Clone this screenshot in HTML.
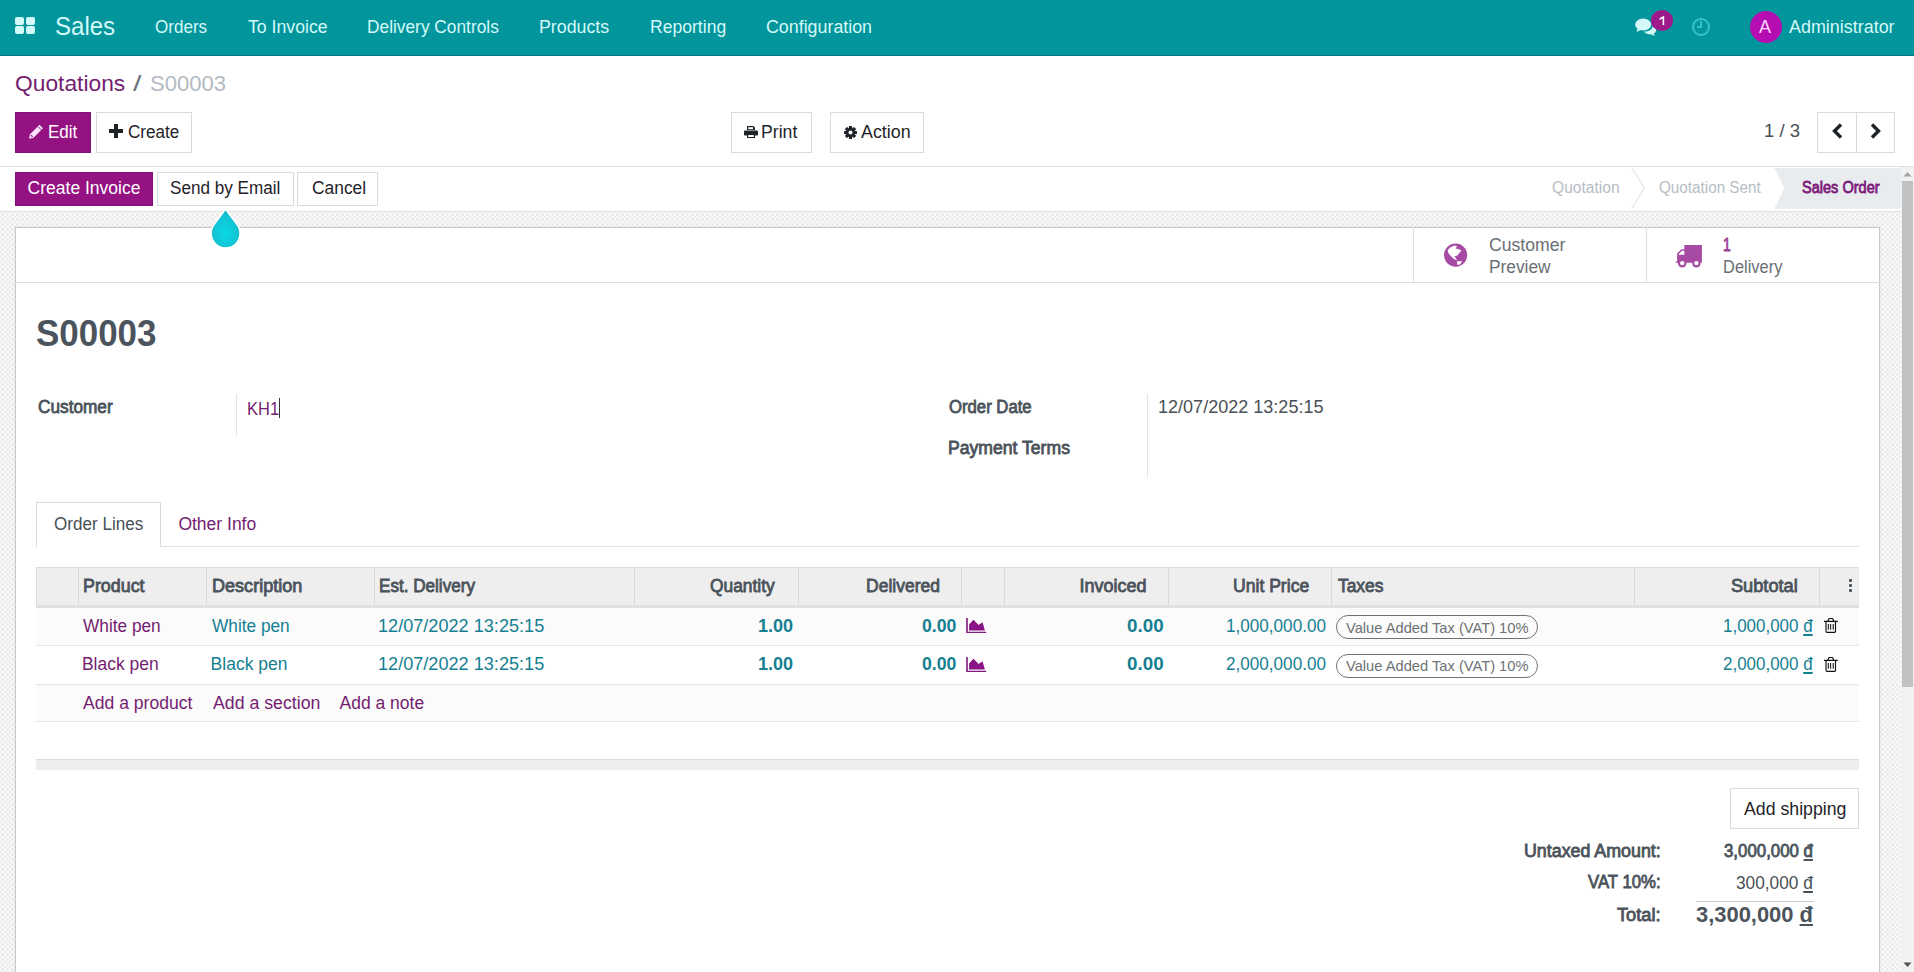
<!DOCTYPE html>
<html><head><meta charset="utf-8">
<style>
html,body{margin:0;padding:0;}
body{width:1914px;height:972px;overflow:hidden;position:relative;background:#fff;font-family:"Liberation Sans",sans-serif;}
.t{position:absolute;white-space:pre;transform-origin:0 0;font-family:"Liberation Sans",sans-serif;}
.a{position:absolute;box-sizing:border-box;}
svg{position:absolute;overflow:visible;}
.dong{text-decoration:underline;text-decoration-thickness:1.5px;text-underline-offset:1.5px;}
</style></head>
<body>
<!-- navbar -->
<div class="a" style="left:0;top:0;width:1914px;height:56px;background:#02959b;border-bottom:1px solid #06737a;"></div>
<!-- grid icon -->
<div class="a" style="left:15px;top:17px;width:9px;height:8px;background:#d4f9f9;border-radius:2px"></div>
<div class="a" style="left:26px;top:17px;width:9px;height:8px;background:#d4f9f9;border-radius:2px"></div>
<div class="a" style="left:15px;top:26px;width:9px;height:8px;background:#d4f9f9;border-radius:2px"></div>
<div class="a" style="left:26px;top:26px;width:9px;height:8px;background:#d4f9f9;border-radius:2px"></div>
<!-- chat icon -->
<svg style="left:1635px;top:18px" width="22" height="18" viewBox="0 0 22 18">
 <ellipse cx="8.2" cy="6.5" rx="8" ry="6" fill="#d4f9f9"/>
 <path d="M2.5 10.5 L1.5 14 L6.5 11.5 Z" fill="#d4f9f9"/>
 <path d="M9 13.4 C12.5 14 17 12.5 17.5 8.5 C20 9.5 21.5 11 21 13 C20.5 14.5 19.5 15.3 18.5 15.6 L20 18 L15.5 16.2 C13 16.4 10.5 15.3 9 13.4 Z" fill="#d4f9f9"/>
</svg>
<div class="a" style="left:1651px;top:10px;width:22px;height:20.5px;border-radius:50%;background:#9c1a8c;"></div>
<svg style="left:1651px;top:10px" width="22" height="21" viewBox="0 0 22 21"><path d="M8.6 8.3 L11.9 6.2 H13.2 V15.1 H11.6 V8.4 L8.6 10 Z" fill="#fff"/></svg>
<!-- clock icon -->
<div class="a" style="left:1691.5px;top:17.5px;width:18px;height:18px;border-radius:50%;border:2px solid #37c4c9;"></div>
<div class="a" style="left:1700px;top:21px;width:1.5px;height:6px;background:#37c4c9;"></div>
<div class="a" style="left:1697px;top:26px;width:4.5px;height:1.5px;background:#37c4c9;"></div>
<!-- avatar -->
<div class="a" style="left:1750px;top:11px;width:32px;height:32px;border-radius:50%;background:#b50db2;"></div>
<div class="t" style="left:1759px;top:17.5px;font-size:18px;line-height:18px;color:#ffd9ff">A</div>

<!-- control panel -->
<div class="a" style="left:0;top:166px;width:1914px;height:1px;background:#dfe2e5"></div>
<div class="a" style="left:15px;top:112px;width:76px;height:41px;background:#951283;border:1px solid #84107a;"></div>
<svg style="left:28px;top:123.5px" width="16" height="15" viewBox="0 0 16 15">
 <path d="M11.5 0.8 L15 4.3 L5.5 13.8 L1 14.8 L2 10.3 Z" fill="#fbe3fb"/>
 <path d="M3 11.2 L4.6 12.8" stroke="#951283" stroke-width="1.2"/>
 <path d="M10 2.6 L13.2 5.8" stroke="#951283" stroke-width="1"/>
</svg>
<div class="a" style="left:96px;top:112px;width:96px;height:41px;background:#fff;border:1px solid #d9dbdd;"></div>
<svg style="left:109.4px;top:124px" width="14" height="14" viewBox="0 0 14 14">
 <path d="M5 0 H9 V5 H14 V9 H9 V14 H5 V9 H0 V5 H5 Z" fill="#1f2328"/>
</svg>
<div class="a" style="left:731px;top:112px;width:81px;height:41px;background:#fff;border:1px solid #d9dbdd;"></div>
<svg style="left:744px;top:126px" width="14" height="12" viewBox="0 0 14 12">
 <path d="M3 0 H9.5 L11 1.5 V4 H3 Z" fill="#1f2328"/>
 <path d="M4.2 1.2 H9 V3.2 H4.2 Z" fill="#fff"/>
 <rect x="0" y="4.5" width="14" height="5" rx="1" fill="#1f2328"/>
 <path d="M3 8 H11 V12 H3 Z" fill="#1f2328"/>
 <path d="M4.2 9 H9.8 V11 H4.2 Z" fill="#fff"/>
</svg>
<div class="a" style="left:830px;top:112px;width:94px;height:41px;background:#fff;border:1px solid #d9dbdd;"></div>
<svg style="left:843.5px;top:125.5px" width="13" height="13" viewBox="-6.5 -6.5 13 13">
 <g fill="#1f2328">
  <circle r="4.6"/>
  <rect x="-1.6" y="-6.5" width="3.2" height="13" rx="0.5"/>
  <rect x="-1.6" y="-6.5" width="3.2" height="13" rx="0.5" transform="rotate(45)"/>
  <rect x="-1.6" y="-6.5" width="3.2" height="13" rx="0.5" transform="rotate(90)"/>
  <rect x="-1.6" y="-6.5" width="3.2" height="13" rx="0.5" transform="rotate(135)"/>
 </g>
 <circle r="2" fill="#fff"/>
</svg>
<!-- pager -->
<div class="a" style="left:1817px;top:112px;width:78px;height:41px;background:#fff;border:1px solid #d9dbdd;"></div>
<div class="a" style="left:1856px;top:112px;width:1px;height:41px;background:#d9dbdd;"></div>
<svg style="left:1832px;top:122.6px" width="11" height="16" viewBox="0 0 11 16">
 <path d="M9 1.5 L2.5 8 L9 14.5" stroke="#1f2328" stroke-width="3.4" fill="none"/>
</svg>
<svg style="left:1870px;top:122.6px" width="11" height="16" viewBox="0 0 11 16">
 <path d="M2 1.5 L8.5 8 L2 14.5" stroke="#1f2328" stroke-width="3.4" fill="none"/>
</svg>

<!-- content area background (checker) -->
<div class="a" style="left:0;top:212px;width:1901px;height:760px;background-color:#fdfdfd;background-image:radial-gradient(circle,#e5e5e5 0.8px,rgba(229,229,229,0) 1.8px),radial-gradient(circle,#e5e5e5 0.8px,rgba(229,229,229,0) 1.8px);background-size:5px 5px;background-position:0 0,2.5px 2.5px;"></div>
<!-- statusbar -->
<div class="a" style="left:0;top:211px;width:1901px;height:1px;background:#dfe2e5"></div>
<div class="a" style="left:15px;top:172px;width:138px;height:34px;background:#951283;border:1px solid #84107a;"></div>
<div class="a" style="left:157px;top:172px;width:137px;height:34px;background:#fff;border:1px solid #d9dbdd;"></div>
<div class="a" style="left:297px;top:172px;width:81px;height:34px;background:#fff;border:1px solid #d9dbdd;"></div>
<svg style="left:1620px;top:167px" width="290" height="44" viewBox="1620 167 290 44">
 <path d="M1632.3 168.5 L1644.3 188 L1632.3 207.8" stroke="#e2e2e2" stroke-width="1.2" fill="none"/>
 <path d="M1774.3 168 L1901 168 L1901 208.8 L1774.3 208.8 L1784.4 188 Z" fill="#e9ecef"/>
</svg>

<!-- sheet -->
<div class="a" style="left:15px;top:227px;width:1865px;height:760px;background:#fff;border:1px solid #c9c9c9;box-shadow:0 0 2px rgba(0,0,0,0.10);"></div>
<!-- button box -->
<div class="a" style="left:15px;top:282px;width:1865px;height:1px;background:#dcdfe2"></div>
<div class="a" style="left:1413px;top:227px;width:1px;height:55px;background:#dcdfe2"></div>
<div class="a" style="left:1646px;top:227px;width:1px;height:55px;background:#dcdfe2"></div>
<svg style="left:1440px;top:240px" width="32" height="30" viewBox="0 0 32 30">
 <circle cx="15.6" cy="15.1" r="11.6" fill="#a64aa3"/>
 <path d="M7.7 9.9 L10.5 7.2 L14.5 5.6 L17.3 6.5 L15.4 8.3 L21.6 10.2 L17.3 15.4 L14.5 16.4 L16 18.5 L17 20.5 L15.5 19.8 L13.3 18.5 L10.5 15.8 L8.3 13 Z" fill="#fff"/>
 <path d="M17 21.3 L22.2 21.3 L20 24.5 L17.2 24.8 Z" fill="#fff"/>
</svg>
<svg style="left:1672px;top:240px" width="34" height="30" viewBox="0 0 34 30">
 <path d="M12.3 5.1 H29.9 V22.7 H3.7 V21.5 H5.1 V13.6 L9.3 9.3 H12.3 Z" fill="#a64aa3"/>
 <path d="M6.2 14.8 H12.3 V10.8 H9.9 Z" fill="#fff"/>
 <circle cx="10.2" cy="23.1" r="4.3" fill="#a64aa3"/><circle cx="10.2" cy="23.1" r="2.2" fill="#fff"/>
 <circle cx="24.4" cy="23.1" r="4.3" fill="#a64aa3"/><circle cx="24.4" cy="23.1" r="2.2" fill="#fff"/>
</svg>
<!-- field separators -->
<div class="a" style="left:236px;top:394px;width:1px;height:42px;background:#e3e3e3"></div>
<div class="a" style="left:1147px;top:394px;width:1px;height:83px;background:#e3e3e3"></div>
<div class="a" style="left:278.5px;top:398px;width:1.2px;height:20px;background:#333"></div>
<!-- tabs -->
<div class="a" style="left:36px;top:546px;width:1823px;height:1px;background:#dee2e6"></div>
<div class="a" style="left:36px;top:502px;width:125px;height:45px;background:#fff;border:1px solid #d9dbdd;border-bottom:none;"></div>

<!-- table -->
<div class="a" style="left:36px;top:567px;width:1823px;height:38px;background:#eeeeee;border-top:1px solid #dedede;border-left:1px solid #dcdcdc"></div>
<div class="a" style="left:36px;top:605px;width:1823px;height:3px;background:#dee1e4"></div>
<div class="a" style="left:36px;top:608px;width:1823px;height:37px;background:#fbfbfb"></div>
<div class="a" style="left:36px;top:645px;width:1823px;height:1px;background:#e3e5e8"></div>
<div class="a" style="left:36px;top:684px;width:1823px;height:1px;background:#e3e5e8"></div>
<div class="a" style="left:36px;top:685px;width:1823px;height:36px;background:#fbfbfb"></div>
<div class="a" style="left:36px;top:721px;width:1823px;height:1px;background:#e3e5e8"></div>
<div class="a" style="left:36px;top:759px;width:1823px;height:11px;background:#eeeeee;border-top:1px solid #dcdcdc"></div>
<div id="colseps">
<div class="a" style="left:78px;top:568px;width:1px;height:37px;background:#dadada"></div>
<div class="a" style="left:206px;top:568px;width:1px;height:37px;background:#dadada"></div>
<div class="a" style="left:374px;top:568px;width:1px;height:37px;background:#dadada"></div>
<div class="a" style="left:634px;top:568px;width:1px;height:37px;background:#dadada"></div>
<div class="a" style="left:798px;top:568px;width:1px;height:37px;background:#dadada"></div>
<div class="a" style="left:961px;top:568px;width:1px;height:37px;background:#dadada"></div>
<div class="a" style="left:1004px;top:568px;width:1px;height:37px;background:#dadada"></div>
<div class="a" style="left:1168px;top:568px;width:1px;height:37px;background:#dadada"></div>
<div class="a" style="left:1331px;top:568px;width:1px;height:37px;background:#dadada"></div>
<div class="a" style="left:1634px;top:568px;width:1px;height:37px;background:#dadada"></div>
<div class="a" style="left:1819px;top:568px;width:1px;height:37px;background:#dadada"></div>
</div>
<!-- kebab -->
<div class="a" style="left:1848.5px;top:578.5px;width:3.5px;height:3.5px;background:#4b535b;border-radius:1px"></div>
<div class="a" style="left:1848.5px;top:583.5px;width:3.5px;height:3.5px;background:#4b535b;border-radius:1px"></div>
<div class="a" style="left:1848.5px;top:588.5px;width:3.5px;height:3.5px;background:#4b535b;border-radius:1px"></div>
<!-- badges -->
<div class="a" style="left:1336px;top:615px;width:202px;height:24px;border:1.3px solid #6e7275;border-radius:12px"></div>
<div class="a" style="left:1336px;top:654px;width:202px;height:24px;border:1.3px solid #6e7275;border-radius:12px"></div>
<!-- chart icons -->
<svg style="left:960px;top:612px" width="32" height="26" viewBox="0 0 32 26">
 <path d="M6.2 5.9 H7.8 V19.8 H26.2 V21.1 H6.2 Z" fill="#7d1a7a"/>
 <path d="M9.1 12.5 L13.4 7.7 L18.6 13.1 L22.5 10.2 L24.9 18.5 H9.1 Z" fill="#8a1386"/>
</svg>
<svg style="left:960px;top:650.5px" width="32" height="26" viewBox="0 0 32 26">
 <path d="M6.2 5.9 H7.8 V19.8 H26.2 V21.1 H6.2 Z" fill="#7d1a7a"/>
 <path d="M9.1 12.5 L13.4 7.7 L18.6 13.1 L22.5 10.2 L24.9 18.5 H9.1 Z" fill="#8a1386"/>
</svg>
<!-- trash icons -->
<svg style="left:1818px;top:612px" width="26" height="26" viewBox="0 0 26 26">
 <path d="M9.9 9.4 L10.6 7.2 Q10.9 6.5 11.6 6.5 H14 Q14.7 6.5 15 7.2 L15.7 9.4" stroke="#111" stroke-width="1.2" fill="none"/>
 <path d="M5.9 9.4 H19.8" stroke="#111" stroke-width="1.3"/>
 <path d="M8.0 9.8 V19.3 Q8.0 20.3 9.0 20.3 H16.6 Q17.5 20.3 17.5 19.3 V9.8" stroke="#111" stroke-width="1.15" fill="none"/>
 <path d="M10.3 12 V17.7 M12.6 12 V17.7 M15.2 12 V17.7" stroke="#111" stroke-width="1.05"/>
</svg>
<svg style="left:1818px;top:650.5px" width="26" height="26" viewBox="0 0 26 26">
 <path d="M9.9 9.4 L10.6 7.2 Q10.9 6.5 11.6 6.5 H14 Q14.7 6.5 15 7.2 L15.7 9.4" stroke="#111" stroke-width="1.2" fill="none"/>
 <path d="M5.9 9.4 H19.8" stroke="#111" stroke-width="1.3"/>
 <path d="M8.0 9.8 V19.3 Q8.0 20.3 9.0 20.3 H16.6 Q17.5 20.3 17.5 19.3 V9.8" stroke="#111" stroke-width="1.15" fill="none"/>
 <path d="M10.3 12 V17.7 M12.6 12 V17.7 M15.2 12 V17.7" stroke="#111" stroke-width="1.05"/>
</svg>
<!-- totals -->
<div class="a" style="left:1730px;top:788px;width:129px;height:41px;background:#fff;border:1px solid #d9dbdd;"></div>
<div class="a" style="left:1696px;top:901px;width:118px;height:1px;background:#c8c8c8"></div>

<!-- scrollbar -->
<div class="a" style="left:1901px;top:167px;width:13px;height:805px;background:#f1f1f1"></div>
<div class="a" style="left:1902px;top:181px;width:11px;height:506px;background:#c1c1c1"></div>
<svg style="left:1901px;top:167px" width="13" height="14" viewBox="0 0 13 14"><path d="M2.5 9.5 L6.5 5 L10.5 9.5 Z" fill="#a3a3a3"/></svg>
<svg style="left:1901px;top:958px" width="13" height="14" viewBox="0 0 13 14"><path d="M2.5 4.5 L6.5 9 L10.5 4.5 Z" fill="#505050"/></svg>

<!-- tour drop -->
<svg style="left:200px;top:200px" width="50" height="55" viewBox="0 0 50 55">
 <defs><radialGradient id="dg" cx="0.5" cy="0.62" r="0.6"><stop offset="0" stop-color="#0ad8e6"/><stop offset="1" stop-color="#17b9cb"/></radialGradient></defs>
 <path d="M25.5 9 L13.9 24.9 A14.5 14.5 0 1 0 37.3 24.9 Z" fill="url(#dg)" stroke="#ffffff" stroke-width="1.6" stroke-linejoin="round"/>
</svg>

<div class=t style="left:55.06px;top:14.01px;font-size:25.5px;line-height:25.5px;font-weight:400;color:#d4f9f9;transform:scaleX(0.9419);">Sales</div>
<div class=t style="left:155.22px;top:18.69px;font-size:17.5px;line-height:17.5px;font-weight:400;color:#d4f9f9;transform:scaleX(0.9750);">Orders</div>
<div class=t style="left:248.20px;top:18.69px;font-size:17.5px;line-height:17.5px;font-weight:400;color:#d4f9f9;transform:scaleX(1.0103);">To Invoice</div>
<div class=t style="left:367.11px;top:18.69px;font-size:17.5px;line-height:17.5px;font-weight:400;color:#d4f9f9;transform:scaleX(0.9894);">Delivery Controls</div>
<div class=t style="left:539.08px;top:18.69px;font-size:17.5px;line-height:17.5px;font-weight:400;color:#d4f9f9;transform:scaleX(1.0162);">Products</div>
<div class=t style="left:650.00px;top:18.69px;font-size:17.5px;line-height:17.5px;font-weight:400;color:#d4f9f9;transform:scaleX(1.0041);">Reporting</div>
<div class=t style="left:765.98px;top:18.69px;font-size:17.5px;line-height:17.5px;font-weight:400;color:#d4f9f9;transform:scaleX(1.0186);">Configuration</div>
<div class=t style="left:1789.00px;top:18.59px;font-size:17.5px;line-height:17.5px;font-weight:400;color:#d4f9f9;transform:scaleX(1.0243);">Administrator</div>
<div class=t style="left:14.69px;top:73.25px;font-size:22.5px;line-height:22.5px;font-weight:400;color:#741d70;transform:scaleX(1.0131);">Quotations</div>
<div class=t style="left:132.90px;top:73.25px;font-size:22.5px;line-height:22.5px;font-weight:400;color:#6c757d;transform:scaleX(1.3667);">/</div>
<div class=t style="left:150.12px;top:73.25px;font-size:22.5px;line-height:22.5px;font-weight:400;color:#b3bac2;transform:scaleX(0.9816);">S00003</div>
<div class=t style="left:47.93px;top:123.59px;font-size:17.5px;line-height:17.5px;font-weight:400;color:#ffffff;transform:scaleX(0.9724);">Edit</div>
<div class=t style="left:127.52px;top:123.59px;font-size:17.5px;line-height:17.5px;font-weight:400;color:#1f2328;transform:scaleX(0.9765);">Create</div>
<div class=t style="left:761.29px;top:123.69px;font-size:17.5px;line-height:17.5px;font-weight:400;color:#1f2328;transform:scaleX(1.0086);">Print</div>
<div class=t style="left:860.50px;top:123.69px;font-size:17.5px;line-height:17.5px;font-weight:400;color:#1f2328;transform:scaleX(1.0187);">Action</div>
<div class=t style="left:1763.94px;top:122.69px;font-size:17.5px;line-height:17.5px;font-weight:400;color:#4a4f55;transform:scaleX(1.0594);">1 / 3</div>
<div class=t style="left:27.60px;top:179.89px;font-size:17.5px;line-height:17.5px;font-weight:400;color:#ffffff;">Create Invoice</div>
<div class=t style="left:170.02px;top:179.89px;font-size:17.5px;line-height:17.5px;font-weight:400;color:#1f2328;transform:scaleX(0.9784);">Send by Email</div>
<div class=t style="left:311.61px;top:179.89px;font-size:17.5px;line-height:17.5px;font-weight:400;color:#1f2328;transform:scaleX(0.9942);">Cancel</div>
<div class=t style="left:1552.03px;top:180.26px;font-size:16px;line-height:16px;font-weight:400;color:#b6bdc4;transform:scaleX(0.9750);">Quotation</div>
<div class=t style="left:1659.05px;top:180.26px;font-size:16px;line-height:16px;font-weight:400;color:#b6bdc4;transform:scaleX(0.9528);">Quotation Sent</div>
<div class=t style="left:1802.30px;top:180.46px;font-size:16px;line-height:16px;font-weight:400;color:#7d1c7a;transform:scaleX(0.9093);-webkit-text-stroke:0.8px #7d1c7a;">Sales Order</div>
<div class=t style="left:1488.62px;top:236.26px;font-size:18px;line-height:18px;font-weight:400;color:#6a6f74;transform:scaleX(0.9792);">Customer</div>
<div class=t style="left:1488.64px;top:258.26px;font-size:18px;line-height:18px;font-weight:400;color:#6a6f74;transform:scaleX(0.9619);">Preview</div>
<div class=t style="left:1723.22px;top:236.26px;font-size:18px;line-height:18px;font-weight:400;color:#9b3f98;transform:scaleX(0.7778);-webkit-text-stroke:0.8px #9b3f98;">1</div>
<div class=t style="left:1722.59px;top:258.26px;font-size:18px;line-height:18px;font-weight:400;color:#6a6f74;transform:scaleX(0.9141);">Delivery</div>
<div class=t style="left:36.23px;top:316.03px;font-size:36px;line-height:36px;font-weight:700;color:#4b545d;transform:scaleX(0.9705);">S00003</div>
<div class=t style="left:38.20px;top:398.79px;font-size:17.5px;line-height:17.5px;font-weight:400;color:#4b535b;transform:scaleX(0.9842);-webkit-text-stroke:0.8px #4b535b;">Customer</div>
<div class=t style="left:246.66px;top:401.09px;font-size:17.5px;line-height:17.5px;font-weight:400;color:#741d70;transform:scaleX(0.9438);">KH1</div>
<div class=t style="left:949.20px;top:398.69px;font-size:17.5px;line-height:17.5px;font-weight:400;color:#4b535b;transform:scaleX(0.9547);-webkit-text-stroke:0.8px #4b535b;">Order Date</div>
<div class=t style="left:948.19px;top:440.49px;font-size:17.5px;line-height:17.5px;font-weight:400;color:#4b535b;transform:scaleX(1.0058);-webkit-text-stroke:0.8px #4b535b;">Payment Terms</div>
<div class=t style="left:1158.17px;top:398.69px;font-size:17.5px;line-height:17.5px;font-weight:400;color:#4a4f55;transform:scaleX(1.0308);">12/07/2022 13:25:15</div>
<div class=t style="left:53.52px;top:515.89px;font-size:17.5px;line-height:17.5px;font-weight:400;color:#4a4f55;transform:scaleX(0.9756);">Order Lines</div>
<div class=t style="left:178.40px;top:515.89px;font-size:17.5px;line-height:17.5px;font-weight:400;color:#741d70;">Other Info</div>
<div class=t style="left:83.21px;top:577.26px;font-size:18px;line-height:18px;font-weight:400;color:#4b535b;transform:scaleX(0.9918);-webkit-text-stroke:0.8px #4b535b;">Product</div>
<div class=t style="left:212.30px;top:577.26px;font-size:18px;line-height:18px;font-weight:400;color:#4b535b;transform:scaleX(1.0034);-webkit-text-stroke:0.8px #4b535b;">Description</div>
<div class=t style="left:379.45px;top:577.26px;font-size:18px;line-height:18px;font-weight:400;color:#4b535b;transform:scaleX(0.9500);-webkit-text-stroke:0.8px #4b535b;">Est. Delivery</div>
<div class=t style="left:710.40px;top:577.26px;font-size:18px;line-height:18px;font-weight:400;color:#4b535b;transform:scaleX(0.9642);-webkit-text-stroke:0.8px #4b535b;">Quantity</div>
<div class=t style="left:866.03px;top:577.26px;font-size:18px;line-height:18px;font-weight:400;color:#4b535b;transform:scaleX(0.9730);-webkit-text-stroke:0.8px #4b535b;">Delivered</div>
<div class=t style="left:1079.50px;top:577.26px;font-size:18px;line-height:18px;font-weight:400;color:#4b535b;-webkit-text-stroke:0.8px #4b535b;">Invoiced</div>
<div class=t style="left:1233.02px;top:577.26px;font-size:18px;line-height:18px;font-weight:400;color:#4b535b;transform:scaleX(0.9766);-webkit-text-stroke:0.8px #4b535b;">Unit Price</div>
<div class=t style="left:1337.90px;top:577.26px;font-size:18px;line-height:18px;font-weight:400;color:#4b535b;transform:scaleX(0.9660);-webkit-text-stroke:0.8px #4b535b;">Taxes</div>
<div class=t style="left:1730.59px;top:577.26px;font-size:18px;line-height:18px;font-weight:400;color:#4b535b;transform:scaleX(1.0094);-webkit-text-stroke:0.8px #4b535b;">Subtotal</div>
<div class=t style="left:82.90px;top:617.79px;font-size:17.5px;line-height:17.5px;font-weight:400;color:#741d70;transform:scaleX(0.9859);">White pen</div>
<div class=t style="left:211.60px;top:617.79px;font-size:17.5px;line-height:17.5px;font-weight:400;color:#157f92;transform:scaleX(0.9859);">White pen</div>
<div class=t style="left:378.36px;top:617.79px;font-size:17.5px;line-height:17.5px;font-weight:400;color:#157f92;transform:scaleX(1.0352);">12/07/2022 13:25:15</div>
<div class=t style="left:757.87px;top:617.79px;font-size:17.5px;line-height:17.5px;font-weight:700;color:#157f92;transform:scaleX(1.0312);">1.00</div>
<div class=t style="left:921.89px;top:617.79px;font-size:17.5px;line-height:17.5px;font-weight:700;color:#157f92;transform:scaleX(1.0094);">0.00</div>
<div class=t style="left:1127.22px;top:617.79px;font-size:17.5px;line-height:17.5px;font-weight:700;color:#157f92;transform:scaleX(1.0750);">0.00</div>
<div class=t style="left:1225.52px;top:617.79px;font-size:17.5px;line-height:17.5px;font-weight:400;color:#157f92;transform:scaleX(0.9782);">1,000,000.00</div>
<div class=t style="left:1346.00px;top:619.90px;font-size:15px;line-height:15px;font-weight:400;color:#6e7275;transform:scaleX(0.9785);">Value Added Tax (VAT) 10%</div>
<div class=t style="left:1723.23px;top:617.79px;font-size:17.5px;line-height:17.5px;font-weight:400;color:#157f92;transform:scaleX(0.9696);">1,000,000 <span class=dong>đ</span></div>
<div class=t style="left:81.90px;top:656.29px;font-size:17.5px;line-height:17.5px;font-weight:400;color:#741d70;">Black pen</div>
<div class=t style="left:210.60px;top:656.29px;font-size:17.5px;line-height:17.5px;font-weight:400;color:#157f92;">Black pen</div>
<div class=t style="left:378.36px;top:656.29px;font-size:17.5px;line-height:17.5px;font-weight:400;color:#157f92;transform:scaleX(1.0352);">12/07/2022 13:25:15</div>
<div class=t style="left:757.87px;top:656.29px;font-size:17.5px;line-height:17.5px;font-weight:700;color:#157f92;transform:scaleX(1.0312);">1.00</div>
<div class=t style="left:921.89px;top:656.29px;font-size:17.5px;line-height:17.5px;font-weight:700;color:#157f92;transform:scaleX(1.0094);">0.00</div>
<div class=t style="left:1127.22px;top:656.29px;font-size:17.5px;line-height:17.5px;font-weight:700;color:#157f92;transform:scaleX(1.0750);">0.00</div>
<div class=t style="left:1225.52px;top:656.29px;font-size:17.5px;line-height:17.5px;font-weight:400;color:#157f92;transform:scaleX(0.9782);">2,000,000.00</div>
<div class=t style="left:1346.00px;top:658.40px;font-size:15px;line-height:15px;font-weight:400;color:#6e7275;transform:scaleX(0.9785);">Value Added Tax (VAT) 10%</div>
<div class=t style="left:1723.23px;top:656.29px;font-size:17.5px;line-height:17.5px;font-weight:400;color:#157f92;transform:scaleX(0.9696);">2,000,000 <span class=dong>đ</span></div>
<div class=t style="left:82.50px;top:694.59px;font-size:17.5px;line-height:17.5px;font-weight:400;color:#741d70;transform:scaleX(1.0046);">Add a product</div>
<div class=t style="left:212.60px;top:694.59px;font-size:17.5px;line-height:17.5px;font-weight:400;color:#741d70;transform:scaleX(1.0124);">Add a section</div>
<div class=t style="left:339.50px;top:694.59px;font-size:17.5px;line-height:17.5px;font-weight:400;color:#741d70;">Add a note</div>
<div class=t style="left:1743.80px;top:801.19px;font-size:17.5px;line-height:17.5px;font-weight:400;color:#1f2328;transform:scaleX(1.0120);">Add shipping</div>
<div class=t style="left:1524.38px;top:842.59px;font-size:17.5px;line-height:17.5px;font-weight:400;color:#4b535b;transform:scaleX(1.0182);-webkit-text-stroke:0.8px #4b535b;">Untaxed Amount:</div>
<div class=t style="left:1723.80px;top:843.29px;font-size:17.5px;line-height:17.5px;font-weight:400;color:#4b535b;transform:scaleX(0.9624);-webkit-text-stroke:0.8px #4b535b;">3,000,000 <span class=dong>đ</span></div>
<div class=t style="left:1588.00px;top:873.79px;font-size:17.5px;line-height:17.5px;font-weight:400;color:#4b535b;transform:scaleX(0.9573);-webkit-text-stroke:0.8px #4b535b;">VAT 10%:</div>
<div class=t style="left:1736.01px;top:875.39px;font-size:17.5px;line-height:17.5px;font-weight:400;color:#4a4f55;transform:scaleX(0.9870);">300,000 <span class=dong>đ</span></div>
<div class=t style="left:1616.80px;top:906.69px;font-size:17.5px;line-height:17.5px;font-weight:400;color:#4b535b;transform:scaleX(1.0415);-webkit-text-stroke:0.8px #4b535b;">Total:</div>
<div class=t style="left:1696.08px;top:905.00px;font-size:21.5px;line-height:21.5px;font-weight:700;color:#4b535b;transform:scaleX(1.0193);">3,300,000 <span class=dong>đ</span></div>
</body></html>
